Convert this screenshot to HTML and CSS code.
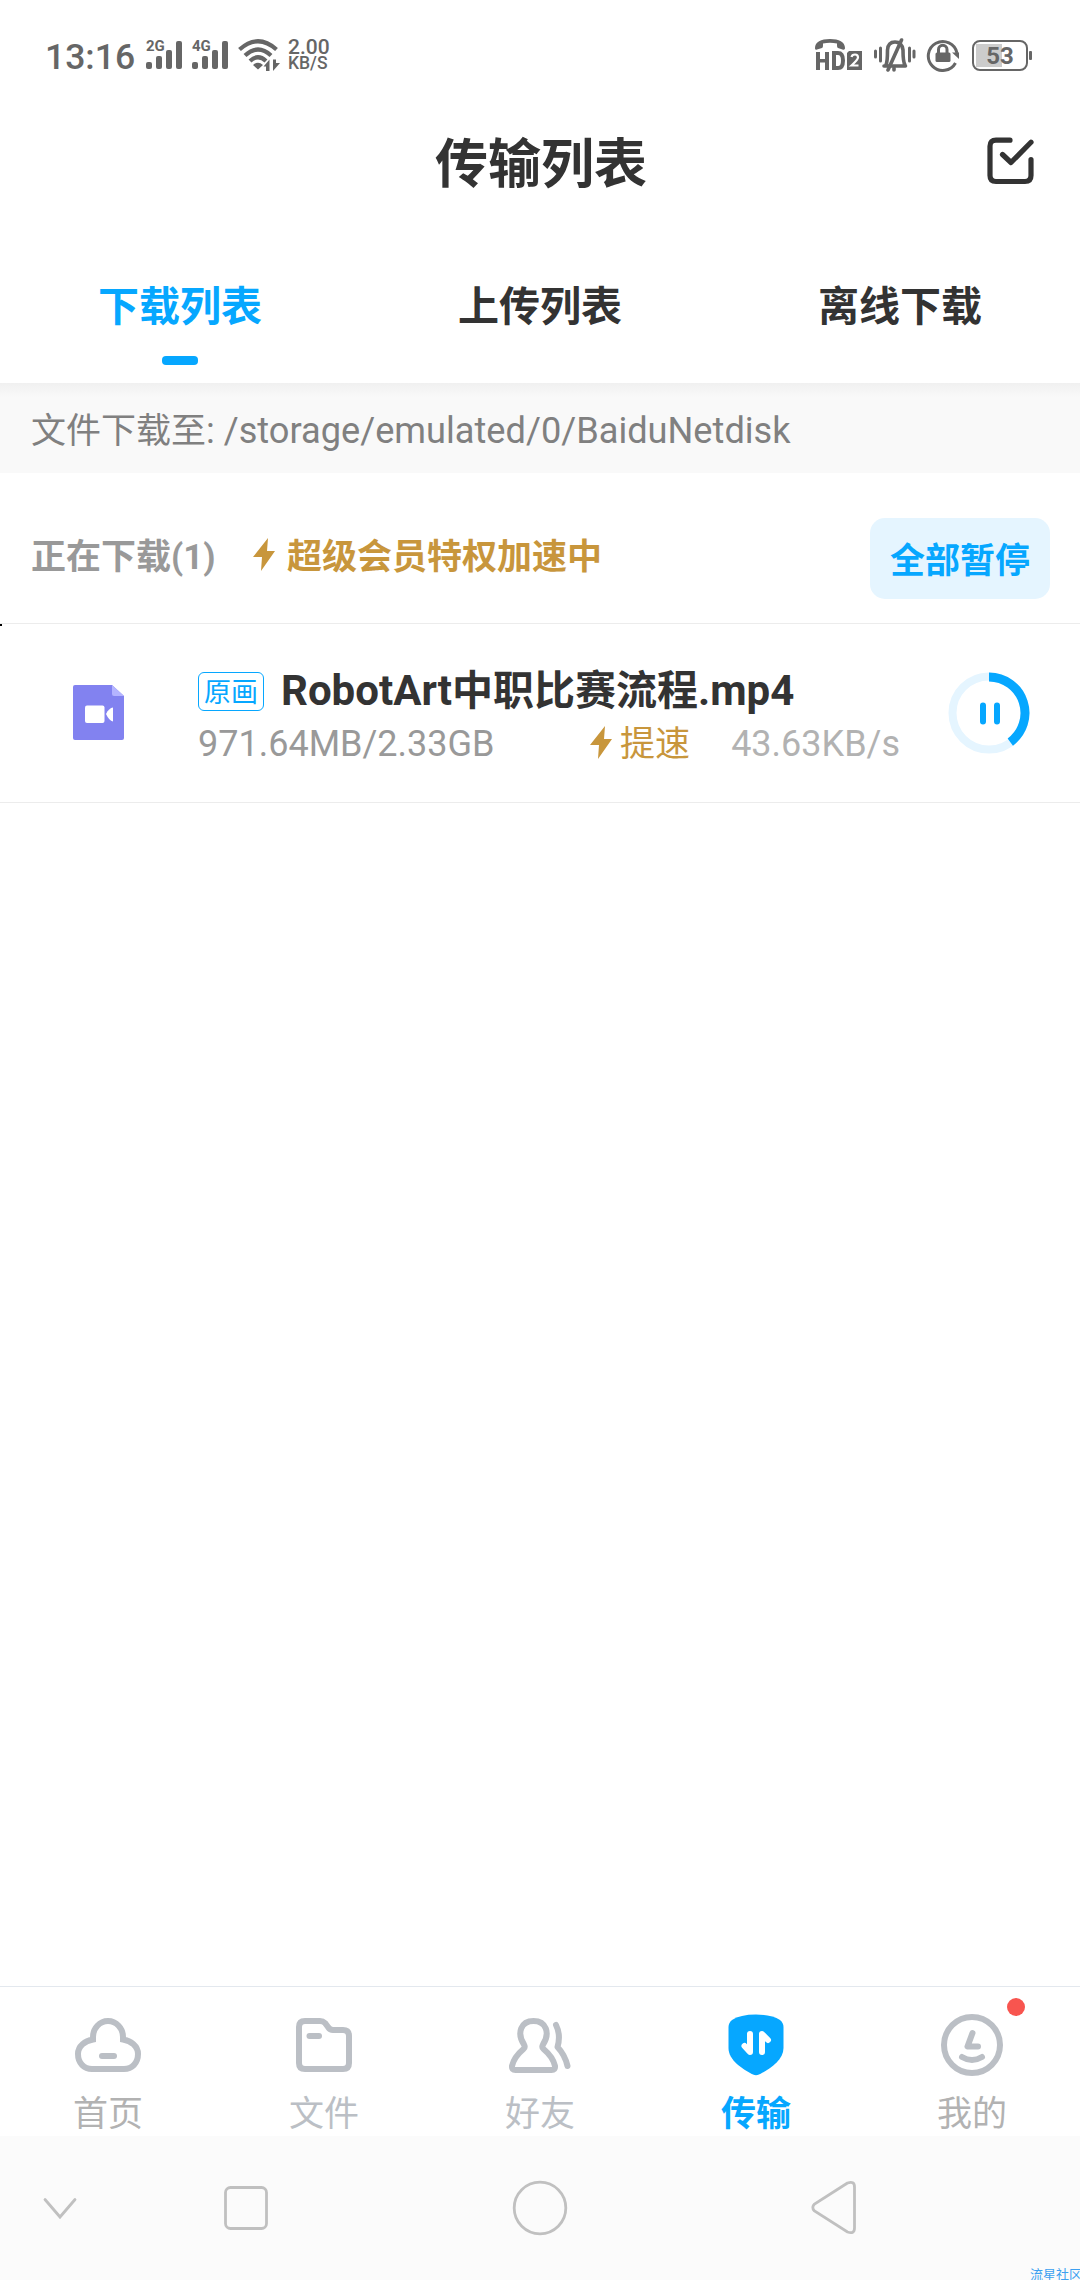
FILE: index.html
```html
<!DOCTYPE html>
<html lang="zh-CN">

<head>
  <meta charset="UTF-8" />
  <meta name="viewport" content="width=device-width, initial-scale=1.0" />
  <title>传输列表</title>
  <link rel="stylesheet" href="styles.css">
</head>

<body>
  <div class="app">
    <!-- 状态栏 -->
    <div class="status-bar">
      <span class="time">13:16</span>
      <div class="signal">
        <span class="net">2G</span>
        <svg width="36" height="28" viewBox="0 0 36 28" fill="#666">
          <rect x="0" y="21" width="6" height="7" rx="2" />
          <rect x="10" y="15" width="6" height="13" rx="2" />
          <rect x="20" y="9" width="6" height="19" rx="2" />
          <rect x="30" y="0" width="6" height="28" rx="2" />
        </svg>
      </div>
      <div class="signal">
        <span class="net">4G</span>
        <svg width="36" height="28" viewBox="0 0 36 28" fill="#666">
          <rect x="0" y="21" width="6" height="7" rx="2" />
          <rect x="10" y="15" width="6" height="13" rx="2" />
          <rect x="20" y="9" width="6" height="19" rx="2" />
          <rect x="30" y="0" width="6" height="28" rx="2" />
        </svg>
      </div>
      <svg class="wifi" width="44" height="32" viewBox="0 0 44 32">
        <g fill="none" stroke="#666" stroke-width="4.2">
          <path d="M1.500 10.500Q20 -6 38.500 10.500" />
          <path d="M7 16.500Q20 4.500 33 16.500" />
          <path d="M12 22Q20 14.500 28 22" />
        </g>
        <path d="M15 26Q20 21.500 25 26L20 30.500ZM25.500 27.500L31.500 20.500V32H28V27.500ZM35 20.500V32L42 24H38V20.500Z" fill="#666" />
      </svg>
      <div class="speed">
        <span class="speed-num">2.00</span>
        <span class="speed-unit">KB/S</span>
      </div>
      <div class="status-right">
        <svg width="48" height="32" viewBox="0 0 48 32" fill="#666">
          <path d="M0 9C0 3 6 0 15 0S30 3 30 9C30 10.500 29 11 27.500 10.500L23 9C22 8.500 22 7.500 22 4.500Q15 3 8 4.500C8 7.500 8 8.500 7 9L2 10.500C.5 11 0 10.500 0 9Z" />
          <path d="M1 13H5V20H10V13H14V31H10V23.500H5V31H1ZM17 12H23Q30 12 30 21.500T23 31H17ZM21 16V27H23Q26 27 26 21.500T23 16Z" fill-rule="evenodd" />
          <path d="M34 12H47V31H32V14Z" />
          <path d="M36.500 18Q37 15.500 40 15.500T43 18.500Q43 20.500 36.500 26.500H43.500" fill="none" stroke="#fff" stroke-width="2.200" />
        </svg>
        <svg class="bell" width="42" height="34" viewBox="0 0 42 34" fill="none" stroke="#666" stroke-width="3.600" stroke-linecap="round">
          <path d="M1.500 13V19M6.500 10V23M35.500 10V23M40 13V19" stroke-width="3" />
          <path d="M10 28H31.500M12 27Q13.500 24 13.500 12Q14 4 21 4T29 12Q29 24 31 27" />
          <path d="M27.500 2L14 32M20 32V30" />
        </svg>
        <svg class="lock" width="34" height="34" viewBox="0 0 34 34" fill="none" stroke="#666">
          <path d="M29.500 25A14.500 14.500 0 1 1 31 15" stroke-width="3" />
          <path d="M26 14.500H33V21Z" fill="#666" stroke="none" />
          <rect x="9.500" y="14.500" width="15" height="9.500" rx="1.500" fill="#666" stroke="none" />
          <path d="M12.500 15V11.500A4.200 4.200 0 0 1 21 11.500V15" stroke-width="3" />
        </svg>
        <div class="battery"><span>53</span></div>
        <i class="battery-cap"></i>
      </div>
    </div>

    <!-- 标题 -->
    <div class="header">
      <h1>传输列表</h1>
      <svg class="check" width="48" height="48" viewBox="0 0 48 48" fill="none" stroke="#333" stroke-width="5.200" stroke-linecap="round" stroke-linejoin="round">
        <path d="M23 3.200H9Q3 3.200 3 9.200V38.500Q3 44.500 9 44.500H38Q44 44.500 44 38.500V22.500" />
        <path d="M15.500 17.500L24 25.500L44 5.200" />
      </svg>
    </div>

    <ul class="tabs">
      <li class="active">下载列表</li>
      <li>上传列表</li>
      <li>离线下载</li>
    </ul>

    <div class="path">文件下载至<span>: /storage/emulated/0/BaiduNetdisk</span></div>

    <!-- 正在下载 -->
    <div class="section">
      <span class="section-title">正在下载(1)</span>
      <svg class="bolt" width="22" height="33" viewBox="0 0 22 33" fill="#c8963c">
        <path d="M15 0L0 19H9L8 33L22 13H14Z" />
      </svg>
      <span class="vip">超级会员特权加速中</span>
      <button class="pause-all">全部暂停</button>
    </div>

    <div class="item">
      <i class="dot"></i>
      <svg class="file-icon" width="51" height="55" viewBox="0 0 51 55">
        <path d="M2 0H39L51 11V53Q51 55 49 55H2Q0 55 0 53V2Q0 0 2 0Z" fill="#8282f0" />
        <path d="M39 0L51 11H41Q39 11 39 9Z" fill="#b4b4ff" />
        <rect x="12" y="20.500" width="19.500" height="17.500" rx="2" fill="#fff" />
        <path d="M33 29Q36 23 40 22.500V36.500Q36 35.500 33 29Z" fill="#fff" />
      </svg>
      <div class="info">
        <div class="name"><span class="tag">原画</span><div>RobotArt<span class="cn">中职比赛流程</span>.mp4</div></div>
        <div class="meta">
          <span class="size">971.64MB/2.33GB</span>
          <svg class="bolt" width="22" height="33" viewBox="0 0 22 33" fill="#c8963c">
            <path d="M15 0L0 19H9L8 33L22 13H14Z" />
          </svg>
          <span class="boost">提速</span>
          <span class="rate">43.63KB/s</span>
        </div>
      </div>
      <svg class="ring" width="82" height="82" viewBox="0 0 82 82" fill="none">
        <circle cx="41" cy="41" r="36.500" stroke="#e5f5ff" stroke-width="8" />
        <path d="M41 5A36 36 0 0 1 62.300 70" stroke="#06a7ff" stroke-width="9" />
        <path d="M35 33.500V49.500M49 33.500V49.500" stroke="#06a7ff" stroke-width="6" stroke-linecap="round" />
      </svg>
    </div>

    <!-- 底部导航 -->
    <ul class="nav">
      <li>
        <svg width="72" height="72" viewBox="0 0 72 72" fill="none" stroke="#bbbfc5" stroke-width="6">
          <path d="M21 30.500V28A15 16 0 0 1 51 28V30.500C59 32 66 37 66 45C66 54 60 60 52 60H20C12 60 6 54 6 45C6 37 13 32 21 30.500Z" />
          <path d="M30 47H42" stroke-linecap="round" />
        </svg>
        <span>首页</span>
      </li>
      <li class="cool">
        <svg width="72" height="72" viewBox="0 0 72 72" fill="none" stroke="#bbbfc5" stroke-width="6" stroke-linecap="round">
          <path d="M17 12H32Q35 12 37 14L40 18Q42 21 45 21H55Q61 21 61 27V54Q61 60 55 60H17Q11 60 11 54V18Q11 12 17 12Z" />
          <path d="M21.500 27H31" />
        </svg>
        <span>文件</span>
      </li>
      <li class="cool">
        <svg width="72" height="72" viewBox="0 0 72 72" fill="none" stroke="#bbbfc5" stroke-width="6" stroke-linecap="round" stroke-linejoin="round">
          <path d="M20 35.500C12.500 24 17 12 29.500 12S46.500 24 39 35.500Q37.500 38 39.500 40Q49 48 51 57Q51.500 61 47.500 61H11.500Q7.500 61 8 57Q10 48 19.500 40Q21.500 38 20 35.500Z" />
          <path d="M52 16Q57 26 53.500 38Q61 46 63.500 57" />
        </svg>
        <span>好友</span>
      </li>
      <li class="active">
        <svg width="72" height="72" viewBox="0 0 72 72">
          <path d="M36 5.500Q52 5.500 60 11Q63.500 14 63.500 18V39C63.500 51 50 60 39 65.500Q36 67 33 65.500C22 60 8.500 51 8.500 39V18Q8.500 14 12 11Q20 5.500 36 5.500Z" fill="#06a7ff" />
          <path d="M30 25V43L24.500 37M42 43V25L48 31" fill="none" stroke="#fff" stroke-width="6" stroke-linecap="round" stroke-linejoin="round" />
        </svg>
        <span>传输</span>
      </li>
      <li>
        <svg width="72" height="72" viewBox="0 0 72 72" fill="none" stroke="#bbbfc5" stroke-width="6" stroke-linecap="round" stroke-linejoin="round">
          <circle cx="36" cy="36" r="28" />
          <path d="M36.500 24L31.500 37.500H42M26 48Q36 54 46 48" />
        </svg>
        <span>我的</span>
        <i class="badge"></i>
      </li>
    </ul>

    <!-- 系统按键 -->
    <div class="keys">
      <svg class="key-down" width="60" height="60" viewBox="0 0 60 60">
        <path d="M15 21.500L30 39L45 21.500" />
      </svg>
      <svg class="key-recent" width="60" height="60" viewBox="0 0 60 60">
        <rect x="9.500" y="9.500" width="41" height="41" rx="5" />
      </svg>
      <svg class="key-home" width="60" height="60" viewBox="0 0 60 60">
        <circle cx="30" cy="30" r="25.800" />
      </svg>
      <svg class="key-back" width="60" height="60" viewBox="0 0 60 60">
        <path d="M43.500 5L10.500 26Q7 29.500 10.500 33L43.500 54Q50.500 56.500 50.500 50V9Q50.500 2.500 43.500 5Z" />
      </svg>
      <span class="watermark">流星社区</span>
    </div>
  </div>
</body>

</html>
```
FILE: styles.css
```css
* {
  box-sizing: border-box;
}

body {
  margin: 0;
  background: #fff;
  font-family: Roboto, "Noto Sans CJK SC", sans-serif;
}

ul {
  margin: 0;
  padding: 0;
  list-style: none;
}

svg {
  display: block;
  flex-shrink: 0;
}

.app {
  width: 1080px;
  height: 2280px;
  display: flex;
  flex-direction: column;
  overflow: hidden;
}

/* 状态栏 */
.status-bar {
  height: 110px;
  padding: 0 48px 0 45px;
  display: flex;
  align-items: center;
  color: #666;
}

.time {
  width: 101px;
  padding-top: 3px;
  font-size: 35.500px;
  font-weight: 500;
  line-height: 40px;
}

.signal {
  position: relative;
  width: 46px;
}

.net {
  position: absolute;
  left: 0;
  top: -3px;
  font-size: 15px;
  font-weight: 700;
  line-height: 16px;
}

.speed {
  margin-left: 6px;
  display: flex;
  flex-direction: column;
}

.speed-num {
  font-size: 21px;
  line-height: 17px;
}

.speed-unit {
  font-size: 17.500px;
  line-height: 15px;
}

.speed span {
  font-weight: 500;
}

.status-right {
  margin-left: auto;
  display: flex;
  align-items: center;
}

.bell {
  margin-left: 11px;
}

.lock {
  margin-left: 10px;
}

.battery {
  margin-left: 12px;
  width: 56px;
  height: 31px;
  padding: 2px;
  border: 2px solid #666;
  border-radius: 8px;
  background: linear-gradient(90deg, #ccc 26px, #fff 26px) 2px 2px / 48px 23px no-repeat;
  text-align: center;
  font-size: 24px;
  font-weight: 700;
  line-height: 24px;
}

.battery-cap {
  width: 3px;
  height: 9px;
  margin-left: 1px;
  border-radius: 1px;
  background: #666;
}

/* 标题 */
.header {
  position: relative;
  height: 108px;
  padding: 2px 0 0 2px;
  display: flex;
  justify-content: center;
  align-items: center;
}

.header h1 {
  margin: 0;
  color: #333;
  font-size: 53px;
  font-weight: 700;
  line-height: 60px;
}

.check {
  position: absolute;
  right: 45px;
  top: 27px;
}

.tabs {
  height: 165px;
  padding-top: 64px;
  display: flex;
}

.tabs li {
  flex: 1;
  display: flex;
  flex-direction: column;
  align-items: center;
  color: #333;
  font-size: 41px;
  font-weight: 700;
  line-height: 50px;
}

.tabs .active {
  color: #06a7ff;
}

.tabs .active::after {
  content: "";
  width: 36px;
  height: 9px;
  margin-top: 24px;
  border-radius: 4px;
  background: #06a7ff;
}

.path {
  height: 90px;
  padding: 5px 31px 0;
  background: linear-gradient(#f0f0f0, #f9f9f9 14px);
  color: #808080;
  font-size: 35px;
  line-height: 86px;
}

.path span {
  font-size: 36.200px;
}

/* 正在下载 */
.section {
  height: 151px;
  padding: 45px 30px 24px 31px;
  display: flex;
  align-items: center;
  border-bottom: 1px solid #ececec;
  font-size: 35px;
  font-weight: 700;
  line-height: 50px;
}

.section span {
  padding-bottom: 2px;
}

.section-title {
  width: 222px;
  color: #999;
}

.section .bolt {
  margin: -9px 12px 0 0;
}

.vip {
  color: #c8963c;
}

.pause-all {
  width: 180px;
  height: 81px;
  margin-left: auto;
  padding: 6px 0 0;
  border: none;
  border-radius: 15px;
  background: #e5f5ff;
  color: #06a7ff;
  font: inherit;
}

.item {
  position: relative;
  height: 179px;
  display: flex;
  align-items: center;
  padding: 0 50px 0 73px;
  border-bottom: 1px solid #ececec;
}

.dot {
  position: absolute;
  left: 0;
  top: 0;
  width: 2px;
  height: 2px;
  background: #000;
}

.file-icon {
  margin-top: -1px;
}

.info {
  width: 702px;
  margin-left: 74px;
  padding-top: 9px;
}

.name {
  display: flex;
  align-items: center;
  color: #333;
  font-size: 42px;
  font-weight: 700;
  line-height: 53px;
}

.name .cn {
  font-size: 41px;
}

.tag {
  width: 66px;
  height: 39px;
  margin-right: 17px;
  border: 1px solid #06a7ff;
  border-radius: 6px;
  color: #06a7ff;
  font-size: 27px;
  font-weight: 400;
  line-height: 41px;
  text-align: center;
}

.meta {
  display: flex;
  align-items: center;
  color: #999;
  font-size: 36px;
  line-height: 53px;
}

.size {
  width: 392px;
}

.meta .bolt {
  margin-top: -5px;
}

.boost {
  margin-left: 8px;
  color: #c8963c;
  font-size: 35px;
}

.rate {
  margin-left: auto;
  color: #b2b2b2;
}

.ring {
  margin: -1px 0 0 48px;
}

/* 底部导航 */
.nav {
  height: 150px;
  margin-top: auto;
  padding-top: 22px;
  display: flex;
  border-top: 1px solid #e3e8ee;
}

.nav li {
  position: relative;
  flex: 1;
  display: flex;
  flex-direction: column;
  align-items: center;
  color: #b2b2b2;
  font-size: 35px;
  line-height: 40px;
}

.nav span {
  margin-top: 14px;
}

.nav .cool {
  color: #bbbfc5;
}

.nav .active {
  color: #06a7ff;
  font-weight: 700;
}

.badge {
  position: absolute;
  left: 143px;
  top: -11px;
  width: 18px;
  height: 18px;
  border-radius: 50%;
  background: #f8554f;
}

.keys {
  position: relative;
  height: 144px;
  padding-left: 30px;
  display: flex;
  align-items: center;
  background: #fbfbfb;
}

.keys svg {
  fill: none;
  stroke: #c0c0c0;
  stroke-width: 2.800;
  stroke-linecap: round;
}

.key-recent {
  margin-left: 126px;
}

.key-home,
.key-back {
  margin-left: 234px;
}

.watermark {
  position: absolute;
  right: -2px;
  bottom: -3px;
  color: #3ca0f0;
  font-size: 13px;
  line-height: 16px;
}
```
